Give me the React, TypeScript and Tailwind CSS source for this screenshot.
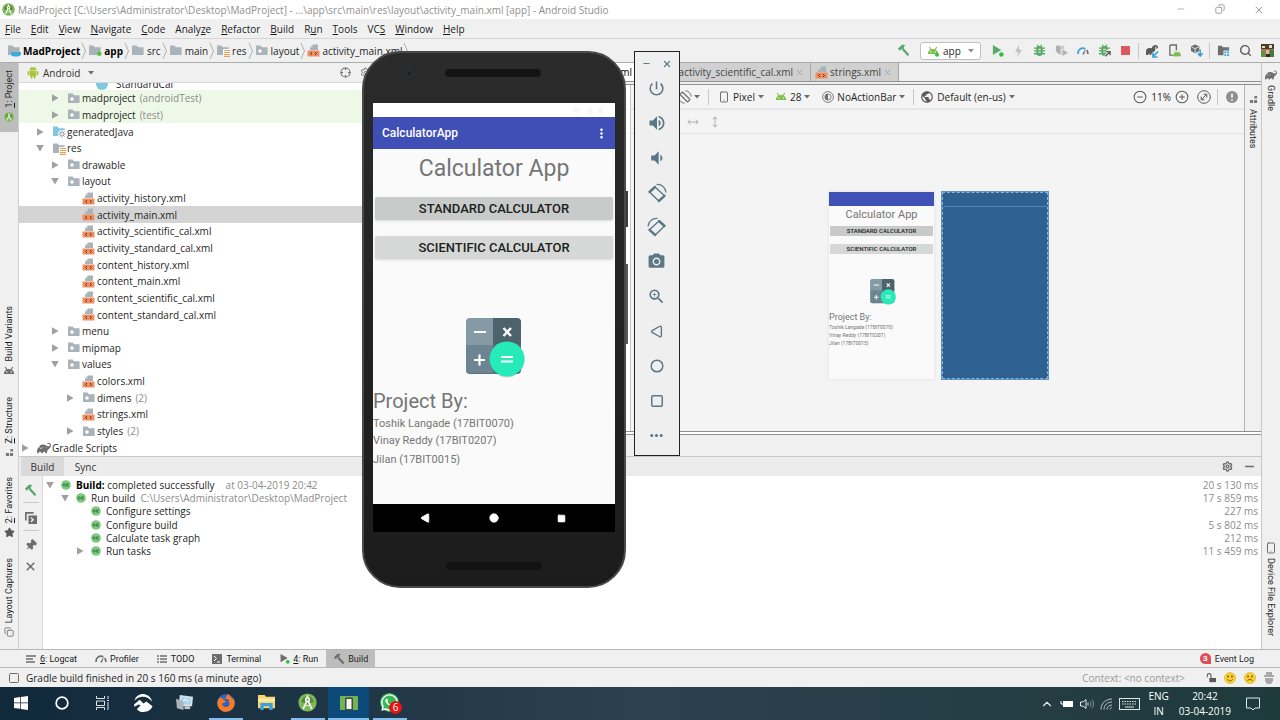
import type { ReactNode } from "react";
import {
  MdPowerSettingsNew, MdVolumeUp, MdVolumeDown, MdPhotoCamera, MdZoomIn,
  MdMoreHoriz, MdMoreVert, MdSignalWifi4Bar, MdSignalCellular4Bar, MdBatteryFull, MdPublic,
} from "react-icons/md";
import { SiGradle } from "react-icons/si";
import { FaWhatsapp, FaFirefoxBrowser } from "react-icons/fa";
import {
  X, Minus, Square, Search, Settings, Pin, Star, Circle, CirclePlus, CircleMinus, Crosshair,
  Smartphone, MoveHorizontal, MoveVertical, ChevronUp, Copy, Triangle,
} from "lucide-react";

/* ---------- icons ---------- */

const Folder = ({ kind = "dot" }: { kind?: "plain" | "dot" | "res" | "java" | "module" | "project" }) => (
  <svg viewBox="0 0 14 13" className="w-[14px] h-[13px] shrink-0" aria-hidden="true">
    <path d="M1 1.5h4.6l1.3 1.7H12.6V11H1z" fill={kind === "java" ? "#7fc8df" : "#a9b3b9"} />
    {kind === "dot" && <circle cx="5" cy="7" r="1.8" fill="#fff" />}
    {kind === "module" && <circle cx="11.3" cy="9.8" r="2.3" fill="#4fc34a" />}
    {kind === "project" && <path d="M4 8h10v1.5c0 2-1.5 3-4 3H7c-2 0-3-1-3-3z" fill="#3fa9dc" />}
    {kind === "res" && (
      <g>
        <rect x="7" y="5" width="7" height="8" fill="#fff" />
        <path d="M8 6.5h6M8 8.5h6M8 10.5h6M8 12.4h6" stroke="#e0a458" strokeWidth="1.1" />
      </g>
    )}
    {kind === "java" && (
      <g>
        <circle cx="10" cy="9" r="4" fill="#fff" />
        <path d="M10 5.4v7.2M6.4 9h7.2M7.5 6.5l5 5M12.5 6.5l-5 5" stroke="#8b98a0" strokeWidth="1" />
        <circle cx="10" cy="9" r="1" fill="#fff" />
      </g>
    )}
  </svg>
);

const XmlIcon = () => (
  <svg viewBox="0 0 13 13" className="w-[13px] h-[13px] shrink-0" aria-hidden="true">
    <path d="M6 .5h5V6H3V3.5z" fill="#a9b3b9" />
    <path d="M5.5.7v2.8H3z" fill="#ccd3d8" />
    <rect x=".5" y="6.5" width="12" height="6" fill="#ee8f62" />
    <path d="M5 8L3.4 9.5 5 11M8 8l1.6 1.5L8 11" fill="none" stroke="#6b3218" strokeWidth="1" />
  </svg>
);

const Droid = ({ dot = false, className = "w-3 h-3 text-[#7cc04b]" }: { dot?: boolean; className?: string }) => (
  <svg viewBox="0 0 12 12" className={`shrink-0 ${className}`} aria-hidden="true">
    <path d="M.8 9a5.2 5 0 0 1 10.4 0z" fill="currentColor" />
    <path d="M2.3 2l1.6 2.8M9.7 2L8.1 4.8" stroke="currentColor" strokeWidth="1.1" />
    <circle cx="3.8" cy="6.9" r=".7" fill="#fff" />
    <circle cx="8.2" cy="6.9" r=".7" fill="#fff" />
    {dot && <circle cx="10" cy="9.8" r="2" fill="#2fbf3b" />}
  </svg>
);

const DroidFull = () => (
  <svg viewBox="0 0 12 13" className="w-3 h-[13px] shrink-0" fill="#a4c639" aria-hidden="true">
    <path d="M2.6 4.6a3.4 3.3 0 0 1 6.8 0zM2.6 5.1h6.8v4.6a.8.8 0 0 1-.8.8H3.4a.8.8 0 0 1-.8-.8z" />
    <rect x=".6" y="5" width="1.5" height="4.2" rx=".7" />
    <rect x="9.9" y="5" width="1.5" height="4.2" rx=".7" />
    <rect x="3.7" y="9" width="1.6" height="3.8" rx=".7" />
    <rect x="6.7" y="9" width="1.6" height="3.8" rx=".7" />
    <path d="M3.5.4l1 1.6M8.5.4l-1 1.6" stroke="#a4c639" strokeWidth=".5" />
  </svg>
);

const StudioLogo = ({ className = "w-3 h-3" }: { className?: string }) => (
  <svg viewBox="0 0 20 20" className={`shrink-0 ${className}`} aria-hidden="true">
    <circle cx="10" cy="10" r="9.6" fill="#7db956" />
    <path d="M3.6 9.5a6.4 6 0 0 1 12.8 0c-4 1.8-8.8 1.8-12.8 0z" fill="#56863c" />
    <path d="M10.6 8l4 9M9.4 8l-4 9" stroke="#fafafa" strokeWidth="1.7" fill="none" />
    <path d="M7.2 12.8c1.8.8 3.8.8 5.6 0" stroke="#e8f0e2" strokeWidth="1.2" fill="none" />
    <circle cx="10" cy="7" r="2.7" fill="#fafafa" />
    <path d="M10 2.5v3" stroke="#fafafa" strokeWidth="1.8" />
    <circle cx="10" cy="7" r="1" fill="#4b7f35" />
  </svg>
);

const Hammer = ({ className = "w-3 h-3 text-[#59a869]" }: { className?: string }) => (
  <svg viewBox="0 0 14 14" className={`shrink-0 ${className}`} aria-hidden="true">
    <path d="M1 5.2L5 1.2C6.5.6 8 .8 9.2 1.6L7.3 2.8l.2 1.5-1 1-1.4-.2-2.2 2.2z" fill="currentColor" />
    <path d="M6 5.2L12.4 12.2" stroke="currentColor" strokeWidth="2.4" />
  </svg>
);

const Play = ({ className = "w-3 h-3" }: { className?: string }) => (
  <svg viewBox="0 0 14 14" className={`shrink-0 ${className}`} aria-hidden="true">
    <path d="M2 1.2v10.6L11 6.5z" fill="currentColor" />
    <circle cx="11.2" cy="11.2" r="2.4" fill="#2fbf3b" />
  </svg>
);

const Bug = ({ attach = false }: { attach?: boolean }) => (
  <svg viewBox="0 0 14 14" className="w-[13px] h-[13px]" aria-hidden="true">
    <path d="M3.5 4.2C3.5 1.4 10.5 1.4 10.5 4.2V10c0 3.8-7 3.8-7 0z" fill="#59a869" />
    <path d="M1 4.5h3M10 4.5h3M1 7.5h3M10 7.5h3M1 10.5h3M10 10.5h3M4.5 1l1 1.5M9.5 1l-1 1.5" stroke="#59a869" strokeWidth="1.4" />
    <path d="M5.6 5.8h2.8M5.6 8.6h2.8" stroke="#fff" strokeWidth="1" />
    {attach && <path d="M8 13.2L12.6 8.6M9 8.2h4v4" stroke="#f0f0f0" strokeWidth="3.4" fill="none" />}
    {attach && <path d="M8 13.2L12.6 8.6M9 8.2h4v4" stroke="#5a5a5a" strokeWidth="1.5" fill="none" />}
  </svg>
);

const Gauge = ({ color = "#389fd6" }: { color?: string }) => (
  <svg viewBox="0 0 14 14" className="w-3 h-3" aria-hidden="true">
    <path d="M1.5 10.5a5.4 5.4 0 0 1 8-6" fill="none" stroke={color} strokeWidth="2" />
    <path d="M11.3 6a5.4 5.4 0 0 1 1.2 4.5" fill="none" stroke="#6e6e6e" strokeWidth="2" />
    <path d="M6 10.7L10.5 3.8 8.3 11.2z" fill="#6e6e6e" />
  </svg>
);

const Calc = ({ className }: { className: string }) => (
  <svg viewBox="0 0 60 60" className={className} aria-hidden="true">
    <rect x="1" y="1" width="55" height="55" rx="4" fill="#5b727d" />
    <path d="M5 0H28V27H1V4a4 4 0 0 1 4-4z" fill="#849ba6" />
    <path d="M28 0H52a4 4 0 0 1 4 4V27H28z" fill="#4c626c" />
    <path d="M1 27H28V55H5a4 4 0 0 1-4-4z" fill="#6d8592" />
    <path d="M9 14h12M9 42h11M14.5 36.5v11" stroke="#fff" strokeWidth="2.2" />
    <path d="M38.5 10l7.5 8M46 10l-7.5 8" stroke="#fff" strokeWidth="2.4" />
    <circle cx="42" cy="42" r="17.5" fill="#000" opacity=".15" />
    <circle cx="42" cy="41" r="17.5" fill="#26ebb9" />
    <path d="M36 39h12M36 43.5h12" stroke="#fff" strokeWidth="1.8" />
  </svg>
);

const RotateDevice = ({ className = "" }: { className?: string }) => (
  <svg viewBox="0 0 20 20" className={`w-5 h-5 ${className}`} fill="none" stroke="currentColor" aria-hidden="true">
    <path d="M8 4L17.5 12.8 11.8 18 2.5 9z" strokeWidth="1.4" strokeLinejoin="round" />
    <path d="M8 4L2.5 9M17.5 12.8L11.8 18" strokeWidth="2.4" strokeLinecap="round" />
    <path d="M9.5 1.5C14 .8 18.5 4 19 9.5" strokeWidth="1.2" />
  </svg>
);

const Orientation = () => (
  <svg viewBox="0 0 14 14" className="w-[14px] h-[14px]" fill="none" stroke="#6e6e6e" aria-hidden="true">
    <path d="M4.5 2l7.5 7.5-2.500 2.500L2 4.500z" strokeLinejoin="round" strokeWidth="1.1" />
    <path d="M7.500.8a6 6 0 0 1 5.700 5.700M6.500 13.200A6 6 0 0 1 .8 7.500" />
  </svg>
);

const Caret = ({ className = "text-[#6e6e6e]" }: { className?: string }) => (
  <svg viewBox="0 0 6 4" className={`w-[6px] h-[4px] shrink-0 ${className}`} aria-hidden="true">
    <path d="M0 0h6L3 3.6z" fill="currentColor" />
  </svg>
);

const Twisty = ({ open }: { open?: boolean }) => (
  <svg viewBox="0 0 8 8" className="w-2 h-2 shrink-0" fill="#a0a0a0" aria-hidden="true">
    <path d={open ? "M.2 1h7.6L4 7.6z" : "M1 .2v7.6L7.6 4z"} />
  </svg>
);

const Blocks = () => (
  <svg viewBox="0 0 10 10" className="w-[9px] h-[9px]" fill="#7a7a7a" aria-hidden="true">
    <path d="M6 1h3v3H6zM1 5.5h3.5V9H1zM5.5 5.5H9V9H5.5z" />
  </svg>
);

const Face = ({ sad = false }: { sad?: boolean }) => (
  <svg viewBox="0 0 14 14" className="w-3 h-3" aria-hidden="true">
    <circle cx="7" cy="7" r="6.5" fill="#f8cf2c" stroke="#d9a520" strokeWidth=".6" />
    <circle cx="4.7" cy="5.2" r="1" fill="#5d4308" />
    <circle cx="9.3" cy="5.2" r="1" fill="#5d4308" />
    <path d={sad ? "M4 10.5c1.5-2.5 4.5-2.5 6 0" : "M4 8.5c1.5 2.5 4.5 2.5 6 0"} fill="none" stroke="#5d4308" strokeWidth="1" />
  </svg>
);

const Ok = () => (
  <svg viewBox="0 0 20 20" className="w-[10px] h-[10px] shrink-0" aria-hidden="true">
    <circle cx="10" cy="10" r="9.7" fill="#7ccb80" />
    <circle cx="6.3" cy="10" r="2.4" fill="none" stroke="#2f6635" strokeWidth="1.5" />
    <path d="M11.5 6.5v7M16 6.5L12 10l4 3.5" fill="none" stroke="#2f6635" strokeWidth="1.5" />
  </svg>
);

/* ---------- project tree ---------- */

type Row = { depth: number; open?: boolean; leaf?: boolean; icon: ReactNode; name: string; note?: string; tone?: string };

const folder = (depth: number, name: string, open = false, note?: string, tone?: string): Row => ({
  depth, name, open, note, tone, icon: <Folder />,
});
const xml = (name: string, tone?: string): Row => ({ depth: 3, leaf: true, name, tone, icon: <XmlIcon /> });

const rows: Row[] = [
  folder(2, "madproject", false, "(androidTest)", "bg-[#edf9e6]"),
  folder(2, "madproject", false, "(test)", "bg-[#edf9e6]"),
  { depth: 1, name: "generatedJava", icon: <Folder kind="java" /> },
  { depth: 1, name: "res", open: true, icon: <Folder kind="res" /> },
  folder(2, "drawable"),
  folder(2, "layout", true),
  xml("activity_history.xml"),
  xml("activity_main.xml", "bg-[#d4d4d4]"),
  xml("activity_scientific_cal.xml"),
  xml("activity_standard_cal.xml"),
  xml("content_history.xml"),
  xml("content_main.xml"),
  xml("content_scientific_cal.xml"),
  xml("content_standard_cal.xml"),
  folder(2, "menu"),
  folder(2, "mipmap"),
  folder(2, "values", true),
  xml("colors.xml"),
  folder(3, "dimens", false, "(2)"),
  xml("strings.xml"),
  folder(3, "styles", false, "(2)"),
  { depth: 0, name: "Gradle Scripts", icon: <SiGradle className="w-[14px] h-[14px] shrink-0 text-[#6e6e6e]" /> },
];

const indent = ["pl-[2px]", "pl-[17px]", "pl-[32px]", "pl-[47px]"];

const ProjectTree = () => (
  <div className="flex-1 min-h-0 flex flex-col bg-white">
    <div className="h-[7px] shrink-0 overflow-hidden flex items-end pl-[77px] gap-2">
      <span className="w-3 h-3 rounded-full bg-[#7fc8df]" />
      <span className="leading-3">StandardCal</span>
    </div>
    <ul className="flex-1 min-h-0 grid auto-rows-fr">
      {rows.map((r, i) => (
        <li key={i} className={`flex items-center min-h-0 ${indent[r.depth]} ${r.tone ?? ""}`}>
          <span className="w-[15px] flex justify-start">{!r.leaf && <Twisty open={r.open} />}</span>
          <span className="w-[15px] flex justify-center">{r.icon}</span>
          <span className="pl-[1px] whitespace-pre leading-4">{r.name}</span>
          {r.note && <span className="pl-1 text-[#8c8c8c] leading-4">{r.note}</span>}
        </li>
      ))}
    </ul>
  </div>
);

/* ---------- bars ---------- */

const menus: [string, string, string][] = [
  ["", "F", "ile"], ["", "E", "dit"], ["", "V", "iew"], ["", "N", "avigate"], ["", "C", "ode"],
  ["Analy", "z", "e"], ["", "R", "efactor"], ["", "B", "uild"], ["R", "u", "n"], ["", "T", "ools"],
  ["VC", "S", ""], ["", "W", "indow"], ["", "H", "elp"],
];

const crumbs: { kind: "project" | "module" | "plain" | "res" | "dot" | "xml"; name: string; bold?: boolean }[] = [
  { kind: "project", name: "MadProject", bold: true },
  { kind: "module", name: "app", bold: true },
  { kind: "plain", name: "src" },
  { kind: "plain", name: "main" },
  { kind: "res", name: "res" },
  { kind: "dot", name: "layout" },
  { kind: "xml", name: "activity_main.xml" },
];

const Divider = () => <span className="w-px h-4 bg-[#c8c8c8] mx-[2px]" />;
const Tool = ({ label, children }: { label: string; children: ReactNode }) => (
  <button aria-label={label} className="w-[22px] flex justify-center items-center">{children}</button>
);

const TitleBar = () => (
  <header className="h-[19px] bg-white flex items-center text-[#8f8f8f] pl-[2px] shrink-0">
    <StudioLogo className="w-[13px] h-[13px]" />
    <h1 className="pl-[3px] flex-1 whitespace-nowrap">
      MadProject [C:\Users\Administrator\Desktop\MadProject] - ...\app\src\main\res\layout\activity_main.xml [app] - Android Studio
    </h1>
    <div className="flex pr-[2px]">
      <button aria-label="Minimize" className="w-[39px] flex justify-center"><Minus size={10} strokeWidth={1.5} /></button>
      <button aria-label="Restore" className="w-[39px] flex justify-center"><Copy size={10} strokeWidth={2} className="-scale-x-100" /></button>
      <button aria-label="Close" className="w-[39px] flex justify-center"><X size={12} strokeWidth={1.8} /></button>
    </div>
  </header>
);

const MenuBar = () => (
  <nav className="h-5 bg-[#f0f0f0] border-b border-[#d5d5d5] flex items-center gap-[10px] pl-[5px] shrink-0">
    {menus.map(([a, u, b]) => (
      <button key={a + u + b} className="text-[#1a1a1a]">{a}<span className="underline">{u}</span>{b}</button>
    ))}
  </nav>
);

const ToolBar = () => (
  <div className="h-6 bg-[#f0f0f0] border-b border-[#adadad] flex items-center shrink-0 pl-[7px]">
    <div className="flex-1 flex items-center gap-[2px]">
      {crumbs.map((c) => (
        <a key={c.name} href={`#${c.name}`} className="flex items-center">
          {c.kind === "xml" ? <XmlIcon /> : <Folder kind={c.kind} />}
          <span className={`pl-[2px] ${c.bold ? "font-bold text-black" : ""}`}>{c.name}</span>
          <svg viewBox="0 0 5 16" className="ml-px w-[5px] h-4" aria-hidden="true">
            <path d="M1 0l3.5 8L1 16" fill="none" stroke="#b0b0b0" strokeWidth="1" />
          </svg>
        </a>
      ))}
    </div>
    <Tool label="Make project"><Hammer className="w-[13px] h-[13px] text-[#59a869]" /></Tool>
    <button className="ml-[6px] mr-[5px] w-[61px] h-[18px] rounded-[3px] border border-[#c0c0c0] bg-white flex items-center px-[6px] gap-1">
      <Droid dot />
      <span className="flex-1 text-left">app</span>
      <Caret className="text-[#8c8c8c]" />
    </button>
    <div className="w-[150px] grid grid-cols-7">
      <Tool label="Run"><Play className="w-[13px] h-[13px] text-[#59a869]" /></Tool>
      <Tool label="Apply changes">
        <svg viewBox="0 0 10 14" className="w-[9px] h-3" fill="#c0c0c0" aria-hidden="true"><path d="M5.5 0L1 8h3.5L3.5 14 9 5.5H5.5z" /></svg>
      </Tool>
      <Tool label="Debug"><Bug /></Tool>
      <Tool label="Run with coverage">
        <svg viewBox="0 0 14 14" className="w-[13px] h-[13px]" aria-hidden="true">
          <path d="M1 2h9v4L7 5v7C3 11 1 9 1 6z" fill="#c8c8c8" /><path d="M1 2h4.5v9C3 10 1 8.5 1 6z" fill="#b0b0b0" /><path d="M8 6l6 3.5L8 13z" fill="#b0b0b0" />
        </svg>
      </Tool>
      <Tool label="Profile"><Gauge /></Tool>
      <Tool label="Attach debugger"><Bug attach /></Tool>
      <Tool label="Stop"><span className="w-[9px] h-[9px] bg-[#db5860]" /></Tool>
    </div>
    <Divider />
    <Tool label="Sync with Gradle">
      <svg viewBox="0 0 14 14" className="w-[14px] h-[14px]" aria-hidden="true">
        <path d="M1 11V7.500C1 5 2.500 4 4.500 4L7 4.200C7 2 9.500.8 11.500 1.200c2 .5 2 3.300 0 3.300-.8 0-1-.8-.6-1.200.4.4 1 0 .6-.6-.6-.5-1.600.1-1.300 1.300C10.700 6.500 9.500 8 7.500 8L6 11H4.500V9L3 11z" fill="#5a5a5a" />
        <path d="M13 7.5L8.8 12M8 8.5V13h4.500" stroke="#389fd6" strokeWidth="1.7" fill="none" />
      </svg>
    </Tool>
    <Tool label="AVD manager">
      <svg viewBox="0 0 14 14" className="w-[13px] h-[13px]" aria-hidden="true">
        <path d="M2 1h7v6M2 1v11h4" stroke="#6e6e6e" strokeWidth="1.5" fill="none" />
        <path d="M6 13a3.8 4 0 0 1 7.6 0zM7 8l1 2M12.6 8l-1 2" fill="#7cc04b" stroke="#7cc04b" strokeWidth=".8" />
      </svg>
    </Tool>
    <Tool label="SDK manager">
      <svg viewBox="0 0 14 14" className="w-[13px] h-[13px]" aria-hidden="true">
        <path d="M5.5.5l4.5 2v5L5.5 10 1 7.5v-5z" fill="#6e6e6e" />
        <path d="M1.5 3l4 2 4-2M5.5 5v5" stroke="#f0f0f0" strokeWidth=".9" fill="none" />
        <path d="M11 6v6M8.5 10l2.5 3 2.5-3" stroke="#389fd6" strokeWidth="1.6" fill="none" />
      </svg>
    </Tool>
    <Divider />
    <Tool label="Project structure">
      <svg viewBox="0 0 14 14" className="w-[13px] h-[13px]" aria-hidden="true">
        <path d="M1 2h4l1.5 1.5H13V7H7v5H1z" fill="#6e6e6e" />
        <path d="M8 8h2v2H8zM11 8h2v2h-2zM8 11h2v2H8zM11 11h2v2h-2zM11 5.5h2v1.7h-2z" fill="#389fd6" />
      </svg>
    </Tool>
    <Tool label="Search everywhere"><Search size={13} strokeWidth={2.6} className="text-[#5a5a5a]" /></Tool>
    <Tool label="Account">
      <svg viewBox="0 0 13 13" className="w-[13px] h-[13px]" aria-hidden="true">
        <rect width="13" height="13" fill="#a5755c" />
        <rect width="13" height="5" fill="#4b3c2c" />
        <path d="M1 2h3v2H1zM8 1h3v3H8z" fill="#e9dcc8" />
        <path d="M0 7h4v6H0z" fill="#5d9440" />
        <path d="M5 6h3v4H5z" fill="#e8b69f" />
        <path d="M9 6h4v7H9z" fill="#437d35" />
        <path d="M5 10h4v3H5z" fill="#2e2a28" />
      </svg>
    </Tool>
    <span className="w-[2px]" />
  </div>
);

const SideTab = ({ icon, className = "", children }: { icon: ReactNode; className?: string; children: ReactNode }) => (
  <button className={`w-full flex flex-col items-center gap-1 ${className}`}>
    <span className="[writing-mode:vertical-rl] rotate-180 whitespace-nowrap">{children}</span>
    {icon}
  </button>
);

const LeftStrip = () => (
  <aside className="w-[19px] shrink-0 bg-[#f0f0f0] border-r border-[#d0d0d0] flex flex-col text-[9px] leading-3 font-['Roboto',sans-serif]">
    <SideTab className="bg-[#bdbdbd] h-[69px] justify-end pb-[10px]" icon={<StudioLogo className="w-[10px] h-[10px]" />}>
      <u>1</u>: Project
    </SideTab>
    <span className="flex-1" />
    <SideTab icon={<Droid className="w-3 h-3 text-[#6e6e6e]" />}>Build Variants</SideTab>
    <SideTab className="mt-5" icon={<Blocks />}><u>Z</u>: Structure</SideTab>
    <SideTab className="mt-5" icon={<Star size={11} fill="#5a5a5a" className="text-[#5a5a5a]" />}><u>2</u>: Favorites</SideTab>
    <SideTab className="mt-5 mb-3" icon={<Copy size={10} className="text-[#6e6e6e]" />}>Layout Captures</SideTab>
  </aside>
);

const RightStrip = () => (
  <aside className="w-[19px] shrink-0 bg-[#f0f0f0] border-l border-[#c8c8c8] flex flex-col items-center text-[9px] leading-3 font-['Roboto',sans-serif] pt-[6px] pb-[13px] justify-between">
    <button className="flex flex-col items-center gap-1">
      <SiGradle className="w-3 h-3 text-[#6e6e6e]" />
      <span className="[writing-mode:vertical-rl]">Gradle</span>
    </button>
    <button className="flex flex-col items-center gap-1">
      <Smartphone size={12} className="text-[#6e6e6e]" />
      <span className="[writing-mode:vertical-rl] whitespace-nowrap">Device File Explorer</span>
    </button>
  </aside>
);

/* ---------- editor ---------- */

const Tab = ({ name, active = false, className }: { name: string; active?: boolean; className: string }) => (
  <div className={`flex items-center justify-end gap-[2px] pr-[6px] border-r border-[#a8a8a8] overflow-hidden ${active ? "bg-white" : "bg-[#d0d0d0]"} ${className}`}>
    <XmlIcon />
    <button className={active ? "text-black" : "text-[#444]"}>{name}</button>
    <button aria-label={`Close ${name}`}><X size={9} strokeWidth={2} className="text-[#999]" /></button>
  </div>
);

const AppBody = ({ small = false }: { small?: boolean }) => (
  <div className={`flex flex-col bg-[#fafafa] text-[#757575] font-['Roboto',sans-serif] ${small ? "h-[173px]" : "h-[355px]"}`}>
    <h2 className={`text-center ${small ? "text-[11px] leading-[18px]" : "text-[23px] leading-[39px]"}`}>Calculator App</h2>
    <button className={`bg-[#c9cbca] text-[#202020] font-medium ${small ? "mx-px mt-[2px] h-[10px] text-[6px] leading-[10px]" : "rounded-[2px] shadow-sm mx-[2px] mt-[9px] h-[23px] text-[13px]"}`}>STANDARD CALCULATOR</button>
    <button className={`bg-[#d6d8d7] text-[#202020] font-medium ${small ? "mx-px mt-2 h-[10px] text-[6px] leading-[10px]" : "rounded-[2px] shadow-sm mx-[2px] mt-4 h-[23px] text-[13px]"}`}>SCIENTIFIC CALCULATOR</button>
    <Calc className={small ? "w-[26px] h-[26px] mt-[25px] ml-[41px]" : "w-[60px] h-[60px] mt-[59px] ml-[92px]"} />
    <p className={small ? "mt-[6px] text-[9px] leading-3" : "mt-[11px] text-[20px] leading-6"}>Project By:</p>
    <p className={small ? "text-[5px] leading-2" : "text-[11px] leading-[22px]"}>Toshik Langade (17BIT0070)</p>
    <p className={small ? "text-[5px] leading-2" : "text-[11px] leading-3"}>Vinay Reddy (17BIT0207)</p>
    <p className={small ? "text-[5px] leading-2" : "text-[11px] leading-[26px]"}>Jilan (17BIT0015)</p>
  </div>
);

const Editor = () => (
  <section className="flex-1 min-w-0 flex flex-col bg-[#f0f0f0]">
    <div className="h-[19px] shrink-0 flex border-b border-[#8f8f8f]">
      <Tab name="activity_main.xml" active className="w-[278px]" />
      <Tab name="activity_scientific_cal.xml" className="w-[161px]" />
      <Tab name="strings.xml" className="w-[88px]" />
    </div>
    <div className="mt-[2px] flex-1 min-h-0 border-y border-[#8f8f8f] flex bg-white">
      <div className="w-[259px] shrink-0 border-r border-[#c8c8c8]" />
      <div className="flex-1 min-w-0 flex flex-col bg-[#f4f4f4]">
        <div className="h-[25px] shrink-0 flex items-center pl-[47px] pr-[6px] border-b-2 border-[#e6e6e6]">
          <button aria-label="Orientation" className="flex items-center gap-[2px]">
            <Orientation /><Caret />
          </button>
          <span className="w-px h-4 bg-[#c8c8c8] ml-2 mr-[9px]" />
          <button className="flex items-center gap-[3px]"><Smartphone size={12} className="text-[#6e6e6e]" />Pixel<Caret /></button>
          <button className="flex items-center gap-[3px] ml-[11px]"><Droid className="w-3 h-3 text-[#7cc04b]" />28<Caret /></button>
          <button className="flex items-center gap-[3px] ml-3">
            <svg viewBox="0 0 14 14" className="w-3 h-3" aria-hidden="true">
              <circle cx="7" cy="7" r="6.3" fill="none" stroke="#6e6e6e" /><circle cx="7" cy="7" r="3.6" fill="none" stroke="#6e6e6e" /><path d="M7 3.4v7.2a3.6 3.6 0 0 1 0-7.2z" fill="#6e6e6e" />
            </svg>
            NoActionBar<Caret />
          </button>
          <span className="w-px h-4 bg-[#c8c8c8] ml-2 mr-[6px]" />
          <button className="flex items-center gap-[3px]"><MdPublic className="w-[14px] h-[14px] text-[#5a5a5a]" />Default (en-us)<Caret /></button>
          <span className="flex-1" />
          <button aria-label="Zoom out"><CircleMinus size={14} strokeWidth={1.8} className="text-[#5a5a5a]" /></button>
          <span className="px-1">11%</span>
          <button aria-label="Zoom in"><CirclePlus size={14} strokeWidth={1.8} className="text-[#5a5a5a]" /></button>
          <button aria-label="Zoom to fit" className="ml-2">
            <svg viewBox="0 0 14 14" className="w-[14px] h-[14px]" aria-hidden="true">
              <circle cx="7" cy="7" r="6.3" fill="none" stroke="#5a5a5a" /><path d="M4.5 9.5l5-5M6.5 4.2h3.3v3.3M4.2 6.5v3.3h3.3" fill="none" stroke="#5a5a5a" />
            </svg>
          </button>
          <span className="w-px h-4 bg-[#c8c8c8] ml-[6px] mr-2" />
          <button aria-label="Warnings">
            <svg viewBox="0 0 14 14" className="w-3 h-3" aria-hidden="true"><circle cx="7" cy="7" r="7" fill="#8f8f8f" /><path d="M7 3v5M7 9.5v1.8" stroke="#fff" strokeWidth="1.8" /></svg>
          </button>
        </div>
        <div className="h-6 shrink-0 flex items-center gap-[10px] pl-[56px] border-b border-[#e2e2e2] text-[#b0b0b0]">
          <MoveHorizontal size={12} /><MoveVertical size={12} />
        </div>
        <div className="flex-1 min-h-0 flex items-start gap-2 pt-[58px] pl-[198px]">
          <div className="w-[105px] shadow-[0_0_3px_#ddd]">
            <div className="h-[14px] bg-[#3f51b5]" />
            <AppBody small />
          </div>
          <div className="w-[106px] h-[187px] bg-[#2e6191] border border-dashed border-[#8fb6da] outline outline-[#5f93c4]">
            <div className="h-[14px] border-b border-[#4f86b8]" />
          </div>
        </div>
      </div>
      <aside className="w-[17px] shrink-0 border-l border-[#b5b5b5] bg-[#f0f0f0] flex flex-col items-center gap-[5px] pt-[10px] text-[9px] leading-3 font-['Roboto',sans-serif]">
        <Blocks />
        <button className="[writing-mode:vertical-rl]">Attributes</button>
      </aside>
    </div>
    <div className="h-[24px] shrink-0 border-t-2 border-white bg-[#f0f0f0]"><div className="border-t border-[#8f8f8f]" /></div>
  </section>
);

/* ---------- build panel ---------- */

const buildRows = [
  { pad: "pl-[3px]", open: true, bold: "Build:", text: "completed successfully", note: "at 03-04-2019 20:42", gap: "pl-[11px]", time: "20 s 130 ms" },
  { pad: "pl-[18px]", open: true, text: "Run build", note: "C:\\Users\\Administrator\\Desktop\\MadProject", gap: "pl-[5px]", time: "17 s 859 ms" },
  { pad: "pl-[33px]", text: "Configure settings", time: "227 ms" },
  { pad: "pl-[33px]", text: "Configure build", time: "5 s 802 ms" },
  { pad: "pl-[33px]", text: "Calculate task graph", time: "212 ms" },
  { pad: "pl-[33px]", open: false, text: "Run tasks", time: "11 s 459 ms" },
];

const BuildPanel = () => (
  <section className="h-[193px] shrink-0 flex flex-col bg-white border-t border-[#c8c8c8]">
    <div className="h-[19px] shrink-0 bg-[#ececec] flex items-stretch pl-[2px] pr-px text-[#333]">
      <button className="w-[43px] bg-[#dadada]">Build</button>
      <button className="w-[43px]">Sync</button>
      <span className="flex-1" />
      <Tool label="Options"><Settings size={11} strokeWidth={3} className="text-[#6e6e6e]" /></Tool>
      <Tool label="Hide"><Minus size={13} strokeWidth={3} className="text-[#6e6e6e]" /></Tool>
    </div>
    <div className="flex-1 min-h-0 flex">
      <div className="w-6 bg-[#f0f0f0] border-r border-[#d8d8d8] flex flex-col items-center pt-2 text-[#6e6e6e]">
        <button aria-label="Build"><Hammer className="w-[13px] h-[13px] text-[#59a869]" /></button>
        <span className="w-4 h-px bg-[#c8c8c8] mt-[5px] mb-[9px]" />
        <button aria-label="Toggle view">
          <svg viewBox="0 0 14 14" className="w-3 h-3" aria-hidden="true"><path d="M1 10V1h9" fill="none" stroke="currentColor" strokeWidth="2" /><path d="M4 4h10v10H4z" fill="currentColor" /><path d="M7 6.5L9.5 9 7 11.5" stroke="#fff" strokeWidth="1.4" fill="none" /></svg>
        </button>
        <span className="w-4 h-px bg-[#c8c8c8] mt-[6px] mb-2" />
        <button aria-label="Pin tab"><Pin size={12} fill="currentColor" className="rotate-45" /></button>
        <button aria-label="Close" className="mt-[9px]"><X size={13} strokeWidth={3} /></button>
      </div>
      <ul className="flex-1 h-20 mt-[2px] grid grid-rows-6">
        {buildRows.map((r) => (
          <li key={r.text} className={`flex items-center min-h-0 pr-[3px] leading-3 ${r.pad}`}>
            <span className="w-[15px] shrink-0">{r.open !== undefined && <Twisty open={r.open} />}</span>
            <Ok />
            <span className="pl-[5px]">{r.bold && <b className="text-black">{r.bold} </b>}{r.text}</span>
            {r.note && <span className={`text-[#8c8c8c] ${r.gap}`}>{r.note}</span>}
            <span className="flex-1 text-right text-[#8c8c8c]">{r.time}</span>
          </li>
        ))}
      </ul>
    </div>
  </section>
);

/* ---------- bottom bars ---------- */

const BottomStrip = () => (
  <div className="h-[19px] shrink-0 bg-[#f0f0f0] border-y border-[#b8b8b8] flex items-stretch text-[9px] font-['Roboto',sans-serif] pl-[26px] pr-[26px]">
    <div className="flex items-center gap-[18px] text-[#1a1a1a] pr-2">
      <button className="flex items-center gap-1">
        <svg viewBox="0 0 10 8" className="w-[10px] h-2" aria-hidden="true"><path d="M0 1h10M0 4h7M0 7h9" stroke="#6e6e6e" strokeWidth="1.5" /></svg>
        <span><u>6</u>: Logcat</span>
      </button>
      <button className="flex items-center gap-[3px]"><Gauge color="#6e6e6e" />Profiler</button>
      <button className="flex items-center gap-1">
        <svg viewBox="0 0 10 8" className="w-[10px] h-2" aria-hidden="true"><path d="M0 1h2M0 4h2M0 7h2M3 1h7M3 4h7M3 7h7" stroke="#6e6e6e" strokeWidth="1.5" /></svg>TODO
      </button>
      <button className="flex items-center gap-1">
        <svg viewBox="0 0 10 10" className="w-[10px] h-[10px]" aria-hidden="true"><path d="M0 0h10v10H0z" fill="#6e6e6e" /><path d="M2 2l2.5 2.5L2 7M5 8h3" stroke="#fff" fill="none" /></svg>Terminal
      </button>
      <button className="flex items-center gap-[3px]"><Play className="w-[11px] h-[11px] text-[#6e6e6e]" /><span><u>4</u>: Run</span></button>
    </div>
    <button className="flex items-center gap-[3px] bg-[#bdbdbd] px-[7px]"><Hammer className="w-3 h-3 text-[#6e6e6e]" />Build</button>
    <span className="flex-1" />
    <button className="flex items-center gap-1">
      <span className="w-[11px] h-[11px] rounded-full rounded-br-none bg-[#db4f55] text-white text-[8px] leading-[11px] font-bold">3</span>Event Log
    </button>
  </div>
);

const StatusBar = () => (
  <footer className="h-[19px] shrink-0 bg-[#f0f0f0] flex items-center pl-2 pr-[6px]">
    <Square size={12} strokeWidth={2} className="text-[#6e6e6e]" />
    <span className="pl-[6px] flex-1">Gradle build finished in 20 s 160 ms (a minute ago)</span>
    <span className="text-[#9a9a9a] pr-[21px]">Context: &lt;no context&gt;</span>
    <div className="flex items-center gap-[8px]">
      <svg viewBox="0 0 12 12" className="w-[10px] h-[10px]" aria-hidden="true"><path d="M4 6h8v5H4z" fill="#5a5a5a" /><path d="M1.5 5V3a2 2 0 0 1 4.500 0v3" fill="none" stroke="#5a5a5a" strokeWidth="1.3" /></svg>
      <Face /><Face sad />
      <svg viewBox="0 0 10 12" className="w-[10px] h-3" fill="#a8a8a8" aria-hidden="true"><path d="M2 0h6v3h2v2H0V3h2zM1 6h8v3l-2 3H3L1 9z" /></svg>
    </div>
  </footer>
);

const Task = ({ label, active = "", children }: { label: string; active?: string; children: ReactNode }) => (
  <button aria-label={label} className={`w-[41px] h-full flex flex-col items-center ${active === "full" ? "bg-[#0c4a7a]" : ""}`}>
    <span className="flex-1 flex items-center">{children}</span>
    <span className={`h-[2px] ${active ? "bg-[#86bdec]" : ""} ${active === "full" ? "w-full" : "w-[34px]"}`} />
  </button>
);

const TaskBar = () => (
  <footer className="h-[33px] shrink-0 bg-linear-to-r from-[#10293a] via-[#2c4150] to-[#1e3a3b] text-white flex items-center">
    <Task label="Start">
      <svg viewBox="0 0 14 14" className="w-[14px] h-[14px]" fill="#fff" aria-hidden="true"><path d="M0 2l6-.9v5.500H0zM6.700 1L14 0v6.600H6.700zM0 7.300h6v5.500L0 12zM6.700 7.300H14V14l-7.300-1z" /></svg>
    </Task>
    <Task label="Cortana"><Circle size={14} strokeWidth={3} /></Task>
    <Task label="Task view">
      <svg viewBox="0 0 15 14" className="w-[15px] h-[14px]" fill="none" stroke="#dfe6ea" aria-hidden="true"><path d="M1.5 0v2.5h8V0M1.5 5h8v4.500h-8zM1.500 14v-2.500h8V14M13 0v3M13 6v8M12 4.500h2" /></svg>
    </Task>
    <Task label="Photos">
      <svg viewBox="0 0 22 20" className="w-[21px] h-[19px]" fill="#fff" aria-hidden="true"><path d="M1.500 8C3 2 9 0 13 1.500c4 1 6.500 4 7 7.500C17 5 13 3.500 9 4 6 4.500 3.500 6 1.500 8zM1 12l6-5 4 4 3-2 6.500 5C19 18 15 20 11 20c-3 0-5-1-7-3l4-4-2-1-4.500 2.500z" /></svg>
    </Task>
    <Task label="Remote desktop">
      <svg viewBox="0 0 20 18" className="w-[19px] h-[17px]" aria-hidden="true"><path d="M5 1l14 2-1 10H4z" fill="#dbe3ea" /><path d="M6.500 3L17 4.500 16.500 11H6z" fill="#a9d4ee" /><path d="M8 9l3-4 2 3 2-2" stroke="#fff" fill="none" /><path d="M1 5l8 3v9l-7-2z" fill="#aab4bc" /><path d="M10 13h6v3h-6z" fill="#c8c8c8" /></svg>
    </Task>
    <Task label="Firefox" active="line">
      <span className="w-[18px] h-[18px] rounded-full bg-[#2a63c9] flex items-center justify-center">
        <FaFirefoxBrowser className="w-[18px] h-[18px] text-[#ff7a1a]" />
      </span>
    </Task>
    <Task label="File Explorer">
      <svg viewBox="0 0 20 18" className="w-[19px] h-[17px]" aria-hidden="true"><path d="M1 1h7l1.500 2H19v12H1z" fill="#f7d774" /><path d="M1 5h18v3H1z" fill="#fdeaa8" /><path d="M3.500 17V9.500h13V17h-3.500v-4h-6v4z" fill="#3ba0dc" /></svg>
    </Task>
    <Task label="Android Studio" active="line"><StudioLogo className="w-[19px] h-[19px]" /></Task>
    <Task label="Emulator" active="full">
      <svg viewBox="0 0 20 16" className="w-5 h-4" aria-hidden="true"><rect x="1" y="1" width="18" height="14" rx="1" fill="#73b356" /><rect x="6" y="2.500" width="8" height="13" rx="1" fill="#3d4b42" /><rect x="7.500" y="4" width="5" height="10" fill="#f3f3f3" /></svg>
    </Task>
    <Task label="WhatsApp" active="line">
      <span className="relative">
        <span className="block rounded-full bg-[#35b858]"><FaWhatsapp className="w-[19px] h-[19px] text-white" /></span>
        <span className="absolute -right-[3px] -bottom-[2px] w-[13px] h-[13px] rounded-full bg-[#e81313] text-[10px] leading-[13px]">6</span>
      </span>
    </Task>
    <span className="flex-1" />
    <div className="flex items-center gap-[6px] text-[#e4eaec] pr-2">
      <ChevronUp size={14} strokeWidth={2} />
      <svg viewBox="0 0 14 8" className="w-[14px] h-2" aria-hidden="true"><path d="M3 1h10v6H3z" fill="#fff" /><path d="M1 1v3h2" stroke="#fff" fill="none" /></svg>
      <svg viewBox="0 0 14 12" className="w-[14px] h-3" fill="none" stroke="#dfe6ea" aria-hidden="true"><path d="M.5 4h2.500L6 1.500v9L3 8H.5z" /><path d="M8 4.500v3" /><path d="M10 3c1.300 1.500 1.300 4.500 0 6M12 1.500c2 2.500 2 6.500 0 9" stroke="#7d8f9a" /></svg>
      <svg viewBox="0 0 13 12" className="w-[13px] h-3" fill="none" stroke="#b8c4ca" aria-hidden="true"><path d="M1 11.500C1 5 6 1 12 1M4 11.500C4 7 7.500 4 12 4M7 11.500C7 9 9 7 12 7M10 11.500c0-1 1-2 2-2" /></svg>
      <svg viewBox="0 0 21 12" className="w-[21px] h-3" fill="none" stroke="#dfe6ea" aria-hidden="true"><rect x=".5" y=".5" width="20" height="11" /><path d="M3 3.500h15M3 6h15" strokeDasharray="1.500 1" /><path d="M6 9h9" /></svg>
    </div>
    <div className="flex items-center gap-[10px] text-center leading-[15px] pr-[15px]">
      <span>ENG<br />IN</span>
      <span>20:42<br />03-04-2019</span>
    </div>
    <svg viewBox="0 0 14 14" className="w-[14px] h-[14px] mr-[20px]" fill="none" stroke="#dfe6ea" aria-hidden="true"><path d="M.5 1h13v10H9L7 13l-2-2H.5z" /></svg>
  </footer>
);

/* ---------- emulator windows ---------- */

const Phone = () => (
  <div className="absolute left-[362px] top-[51px] flex items-start">
    <div className="w-[264px] h-[537px] rounded-[38px] bg-linear-to-b from-[#2b2b2b] to-[#1c1c1c] border-2 border-[#4a4a4a] flex flex-col px-[9px] font-['Roboto',sans-serif]">
      <div className="h-[50px] shrink-0 flex items-center pl-[33px] pb-[10px]">
        <span className="w-[7px] h-[7px] rounded-full bg-[#1c2224] border border-[#3a3f42]" />
        <span className="ml-[32px] w-[96px] h-2 rounded-full bg-[#141414]" />
      </div>
      <div className="h-[14px] bg-white flex justify-end items-center gap-[3px] pr-[10px] text-[#f6f6f6]">
        <MdSignalWifi4Bar size={9} /><MdSignalCellular4Bar size={9} /><MdBatteryFull size={9} />
      </div>
      <div className="h-8 shrink-0 bg-[#3f4fb5] text-white flex items-center justify-between pl-[9px] pr-[6px]">
        <span className="text-xs font-medium">CalculatorApp</span>
        <button aria-label="More options"><MdMoreVert size={15} /></button>
      </div>
      <AppBody />
      <div className="h-7 shrink-0 bg-black text-white flex items-center justify-between pl-[47px] pr-[49px]">
        <Triangle size={10} fill="currentColor" className="-rotate-90" />
        <Circle size={10} fill="currentColor" />
        <Square size={9} fill="currentColor" />
      </div>
      <div className="flex-1 flex items-center justify-center pt-[14px]">
        <span className="w-[96px] h-2 rounded-full bg-[#131313]" />
      </div>
    </div>
    <div className="flex flex-col pt-[140px] gap-[37px]">
      <span className="w-[2px] h-9 bg-[#3c3c3c]" />
      <span className="w-[2px] h-20 bg-[#5c5c5c]" />
    </div>
  </div>
);

const EmulatorBar = () => {
  const items: [string, ReactNode][] = [
    ["Power", <MdPowerSettingsNew size={19} />],
    ["Volume up", <MdVolumeUp size={20} />],
    ["Volume down", <MdVolumeDown size={20} />],
    ["Rotate left", <RotateDevice />],
    ["Rotate right", <RotateDevice className="-scale-x-100" />],
    ["Take screenshot", <MdPhotoCamera size={19} />],
    ["Zoom", <MdZoomIn size={19} />],
    ["Back", <Triangle size={13} strokeWidth={2.5} className="-rotate-90" />],
    ["Home", <Circle size={14} strokeWidth={2.5} />],
    ["Overview", <Square size={14} strokeWidth={2.5} />],
    ["More", <MdMoreHoriz size={19} />],
  ];
  return (
    <div className="absolute left-[634px] top-[51px] w-[46px] h-[405px] bg-[#efefef] border border-[#222] flex flex-col text-[#607d8b]">
      <div className="h-[19px] shrink-0 flex items-center justify-between px-[7px] pt-1">
        <button aria-label="Minimize emulator"><Minus size={9} strokeWidth={3} /></button>
        <button aria-label="Close emulator"><X size={10} strokeWidth={3} /></button>
      </div>
      <div className="flex-1 grid auto-rows-fr pb-[2px] pr-px">
        {items.map(([label, icon]) => (
          <button key={label} aria-label={label} className="flex items-center justify-center text-[#5b7784]">{icon}</button>
        ))}
      </div>
    </div>
  );
};

export default function App() {
  return (
    <div className="relative h-screen flex flex-col overflow-hidden bg-[#f0f0f0] text-[10px] leading-4 text-[#1f1f1f] font-['Open_Sans','Noto_Sans',sans-serif]">
      <TitleBar />
      <MenuBar />
      <ToolBar />
      <main className="flex-1 min-h-0 flex">
        <LeftStrip />
        <div className="flex-1 min-w-0 flex flex-col">
          <div className="flex-1 min-h-0 flex">
            <section className="w-[353px] shrink-0 flex flex-col">
              <div className="h-5 shrink-0 bg-[#f0f0f0] border-b border-[#d8d8d8] flex items-center pl-2">
                <DroidFull />
                <button className="flex items-center gap-2 pl-1 text-[#333]">Android<Caret /></button>
                <span className="flex-1" />
                <button aria-label="Locate file"><Crosshair size={11} strokeWidth={2.2} className="text-[#6e6e6e]" /></button>
                <button aria-label="Tree settings" className="pl-[9px] pr-px"><Settings size={11} className="text-[#6e6e6e]" /></button>
              </div>
              <ProjectTree />
            </section>
            <Editor />
          </div>
          <BuildPanel />
        </div>
        <RightStrip />
      </main>
      <BottomStrip />
      <StatusBar />
      <TaskBar />
      <Phone />
      <EmulatorBar />
    </div>
  );
}
